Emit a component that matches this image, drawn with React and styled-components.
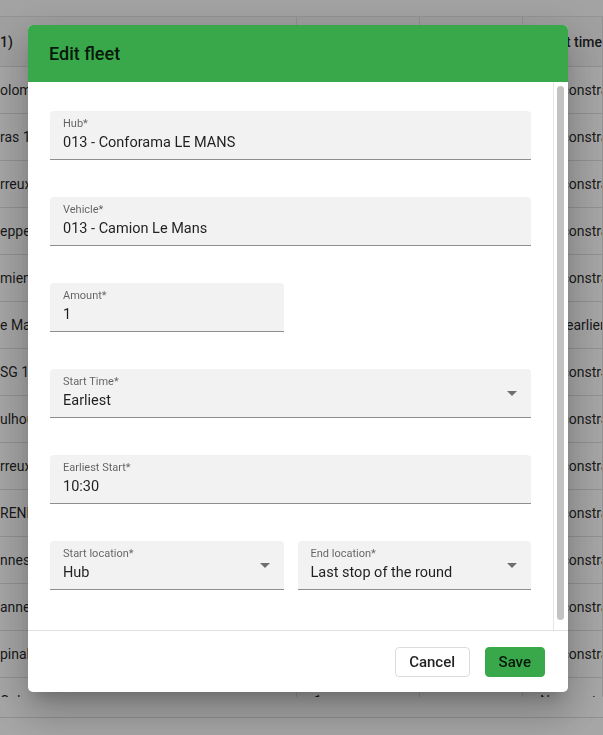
import React from "react";
import styled, { createGlobalStyle } from "styled-components";

const GlobalStyle = createGlobalStyle`
  html, body {
    margin: 0;
    padding: 0;
  }
  body {
    font-family: Roboto, "Noto Sans", "Liberation Sans", sans-serif;
    background: #fff;
  }
`;

const rows = [
  ["olombes", "1", "", "No constraint"],
  ["ras 14", "1", "", "No constraint"],
  ["rreux", "1", "", "No constraint"],
  ["eppe", "1", "", "No constraint"],
  ["miens", "1", "", "No constraint"],
  ["e Mans", "1", "", "Not earlier than 10:30"],
  ["SG 1", "1", "", "No constraint"],
  ["ulhouse", "1", "", "No constraint"],
  ["rreux", "1", "", "No constraint"],
  ["RENNES", "1", "", "No constraint"],
  ["nnes", "1", "", "No constraint"],
  ["annes", "1", "", "No constraint"],
  ["pinal", "1", "", "No constraint"],
  ["Colmar", "1", "", "No constraint"],
];

const ArrowDown = () => (
  <svg width="24" height="24" viewBox="0 0 24 24">
    <path d="M7 10l5 5 5-5z" fill="rgba(0,0,0,0.54)" />
  </svg>
);

function FormField({ label, value, full, select }) {
  return (
    <Field $full={full}>
      <FieldContent>
        <Label>{label}*</Label>
        <Value>{value}</Value>
      </FieldContent>
      {select ? <ArrowDown /> : null}
    </Field>
  );
}

export default function App() {
  return (
    <Page>
      <GlobalStyle />
      <TopStrip />
      <TableRow $header>
        <Cell $first>1)</Cell>
        <Cell>Amount</Cell>
        <Cell>Type</Cell>
        <Cell>Start time</Cell>
      </TableRow>
      <TableBody>
        {rows.map((r, i) => (
          <TableRow key={i}>
            <Cell $first>{r[0]}</Cell>
            <Cell>{r[1]}</Cell>
            <Cell>{r[2]}</Cell>
            <Cell>{r[3]}</Cell>
          </TableRow>
        ))}
      </TableBody>
      <TableFooter />

      <Backdrop>
        <Dialog>
          <DialogHeader>Edit fleet</DialogHeader>
          <DialogBody>
            <ScrollArea>
              <FormGrid>
                <FormField full label="Hub" value="013 - Conforama LE MANS" />
                <FormField full label="Vehicle" value="013 - Camion Le Mans" />
                <FormField label="Amount" value="1" />
                <EmptyCell />
                <FormField full select label="Start Time" value="Earliest" />
                <FormField full label="Earliest Start" value="10:30" />
                <FormField select label="Start location" value="Hub" />
                <FormField
                  select
                  label="End location"
                  value="Last stop of the round"
                />
              </FormGrid>
            </ScrollArea>
            <ScrollTrack>
              <ScrollThumb />
            </ScrollTrack>
          </DialogBody>
          <DialogFooter>
            <Button>Cancel</Button>
            <Button $primary>Save</Button>
          </DialogFooter>
        </Dialog>
      </Backdrop>
    </Page>
  );
}

const Page = styled.div`
  width: 100vw;
  height: 100vh;
  overflow: hidden;
  background: #fff;
  color: rgba(0, 0, 0, 0.87);
`;

const TopStrip = styled.div`
  height: 16px;
  background: #fafafa;
  border-bottom: 1px solid #e4e4e4;
`;

const TableBody = styled.div`
  height: 630px;
  overflow: hidden;
`;

const TableRow = styled.div`
  display: grid;
  grid-template-columns: 297px 123px 103px 1fr;
  height: ${(p) => (p.$header ? "50px" : "47px")};
  box-sizing: border-box;
  border-bottom: 1px solid #e0e0e0;
  background: ${(p) => (p.$header ? "#f6f6f6" : "#fff")};
  font-size: 14px;
  font-weight: ${(p) => (p.$header ? 500 : 400)};
`;

const Cell = styled.div`
  display: flex;
  align-items: center;
  padding-left: ${(p) => (p.$first ? "0" : "17px")};
  border-right: 1px solid #e0e0e0;
  white-space: nowrap;
  overflow: hidden;
`;

const TableFooter = styled.div`
  height: 20px;
  border-bottom: 1px solid #dcdcdc;
`;

const Backdrop = styled.div`
  position: fixed;
  inset: 0;
  background: rgba(0, 0, 0, 0.35);
  display: flex;
  align-items: flex-start;
  justify-content: flex-start;
  padding: 25px 0 0 28px;
  box-sizing: border-box;
`;

const Dialog = styled.div`
  width: 540px;
  height: 667px;
  display: flex;
  flex-direction: column;
  background: #fff;
  border-radius: 5px;
  overflow: hidden;
  box-shadow: 0 11px 15px -7px rgba(0, 0, 0, 0.2),
    0 24px 38px 3px rgba(0, 0, 0, 0.14), 0 9px 46px 8px rgba(0, 0, 0, 0.12);
`;

const DialogHeader = styled.div`
  flex: none;
  height: 57px;
  display: flex;
  align-items: center;
  padding: 0 21px;
  background: #39a84b;
  color: rgba(0, 0, 0, 0.87);
  font-size: 18px;
  font-weight: 500;
`;

const DialogBody = styled.div`
  flex: 1;
  min-height: 0;
  display: flex;
`;

const ScrollArea = styled.div`
  flex: 1;
  min-width: 0;
  overflow: hidden;
  padding: 29px 22px 0;
`;

const ScrollTrack = styled.div`
  flex: none;
  width: 15px;
  box-sizing: border-box;
  border-left: 1px solid #e6e6e6;
  padding: 4px 4px 10px 3px;
  display: flex;
`;

const ScrollThumb = styled.div`
  flex: 1;
  background: #c2c2c2;
  border-radius: 4px;
`;

const FormGrid = styled.div`
  display: grid;
  grid-template-columns: 1fr 1fr;
  column-gap: 14px;
  row-gap: 37px;
`;

const EmptyCell = styled.div``;

const Field = styled.div`
  grid-column: ${(p) => (p.$full ? "1 / -1" : "auto")};
  display: flex;
  height: 49px;
  box-sizing: border-box;
  padding: 0 7px 0 13px;
  background: #f2f2f2;
  border-radius: 4px 4px 0 0;
  border-bottom: 1px solid #8e8e8e;
  svg {
    align-self: center;
    flex: none;
  }
`;

const FieldContent = styled.div`
  flex: 1;
  padding-top: 6px;
  min-width: 0;
`;

const Label = styled.div`
  font-size: 11px;
  line-height: 14px;
  color: rgba(0, 0, 0, 0.6);
`;

const Value = styled.div`
  margin-top: 2px;
  font-size: 14.5px;
  line-height: 19px;
  color: rgba(0, 0, 0, 0.87);
  white-space: nowrap;
`;

const DialogFooter = styled.div`
  flex: none;
  height: 62px;
  box-sizing: border-box;
  border-top: 1px solid #e0e0e0;
  display: flex;
  align-items: center;
  justify-content: flex-end;
  gap: 15px;
  padding-right: 23px;
`;

const Button = styled.button`
  height: 30px;
  padding: 0 ${(p) => (p.$primary ? "13px" : "13.5px")};
  border-radius: 4px;
  border: 1px solid ${(p) => (p.$primary ? "#39a84b" : "#dcdcdc")};
  background: ${(p) => (p.$primary ? "#39a84b" : "#fff")};
  color: rgba(0, 0, 0, 0.87);
  font-family: inherit;
  font-size: 15px;
  font-weight: 500;
  cursor: pointer;
`;
